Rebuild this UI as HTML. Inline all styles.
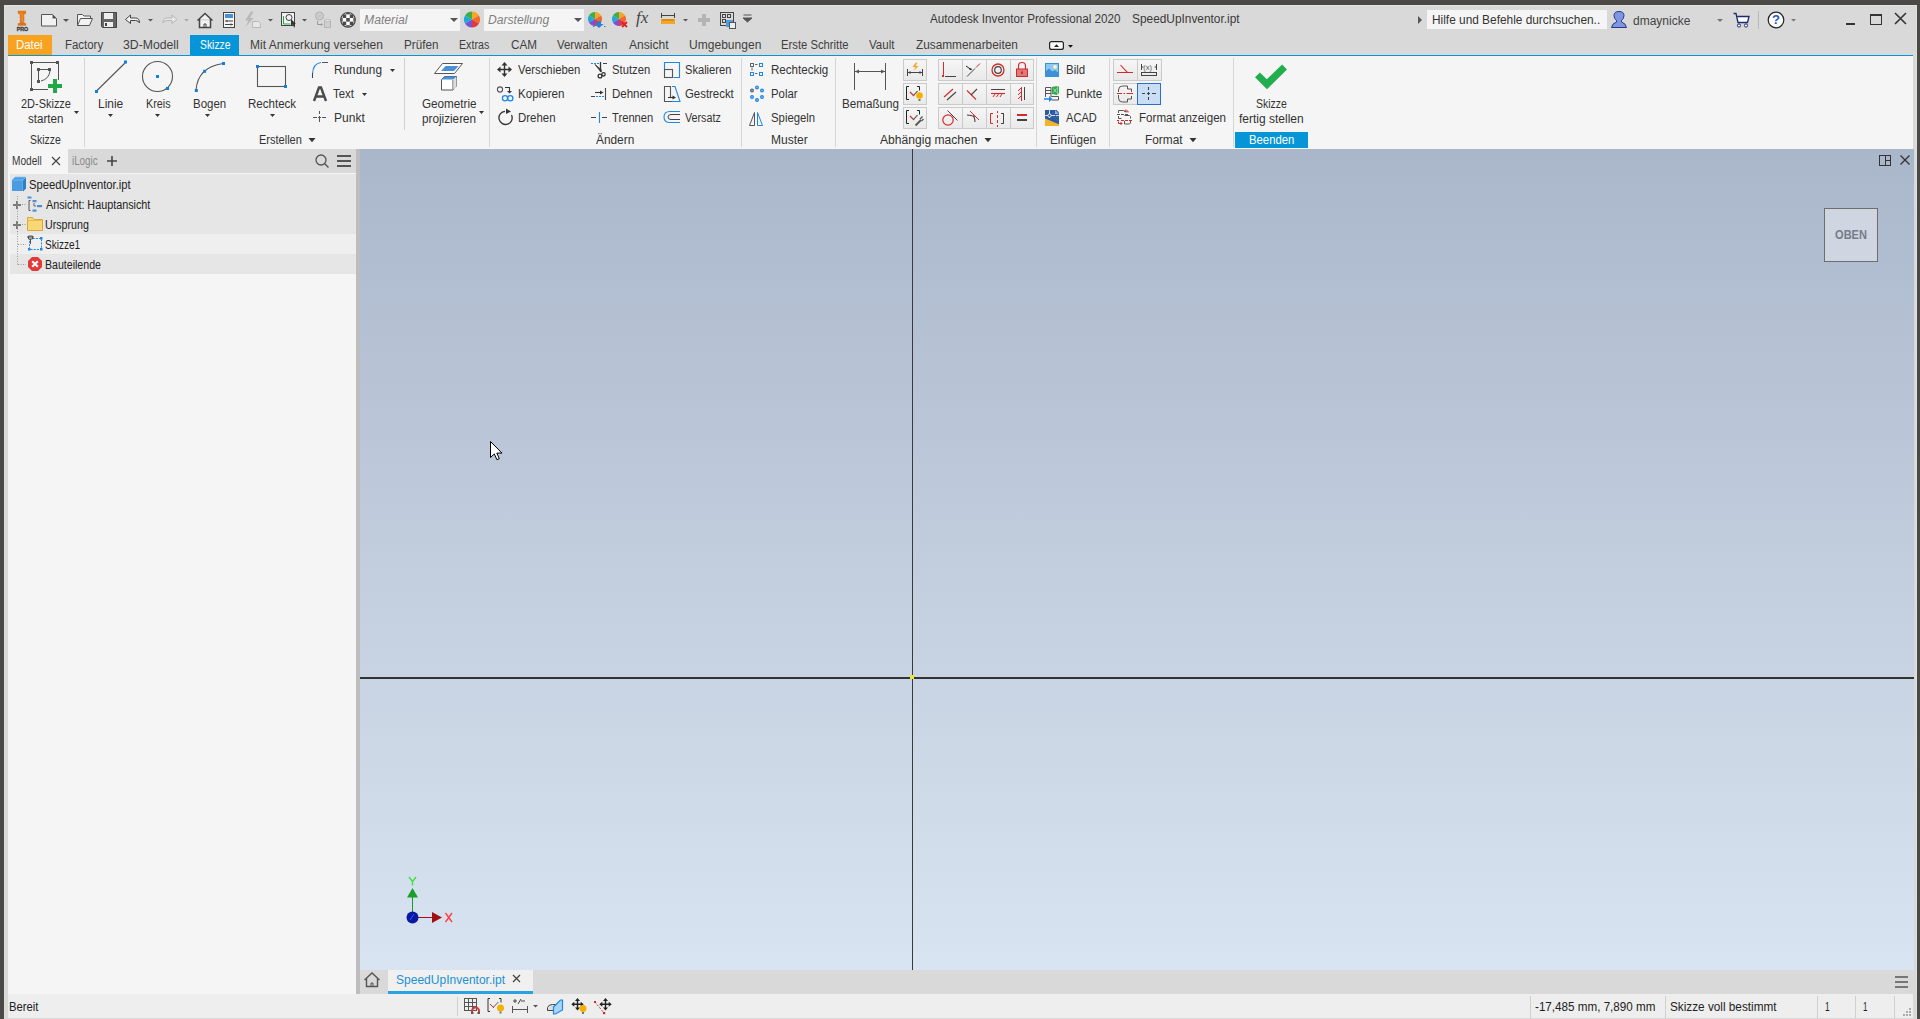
<!DOCTYPE html>
<html><head><meta charset="utf-8">
<style>
*{margin:0;padding:0;box-sizing:border-box}
html,body{width:1920px;height:1019px;overflow:hidden}
body{position:relative;background:#d9d9d9;font-family:"Liberation Sans",sans-serif;font-size:12px;color:#333}
.a{position:absolute}
.t{position:absolute;white-space:nowrap}
#ov{position:absolute;left:0;top:0;overflow:visible}
</style></head><body>
<div class="a" style="left:0px;top:0px;width:1920px;height:5px;background:#4a4946;"></div>
<div class="a" style="left:0px;top:0px;width:4px;height:1019px;background:#4a4946;"></div>
<div class="a" style="left:1917px;top:0px;width:3px;height:1019px;background:#4a4946;"></div>
<div class="a" style="left:4px;top:5px;width:1913px;height:1px;background:#e2e2e2;"></div>
<div class="a" style="left:4px;top:5px;width:1px;height:1014px;background:#e0e0e0;"></div>
<div class="a" style="left:1916px;top:5px;width:1px;height:1014px;background:#e0e0e0;"></div>
<div class="a" style="left:360px;top:9px;width:100px;height:22px;background:#f5f5f5;"></div>
<div class="a" style="left:484px;top:9px;width:100px;height:22px;background:#f5f5f5;"></div>
<div class="a" style="left:1427px;top:10px;width:180px;height:19px;background:#f5f5f5;"></div>
<div class="a" style="left:1758px;top:11px;width:1px;height:18px;background:#b8b8b8;"></div>
<div class="a" style="left:1846px;top:23px;width:9px;height:2px;background:#333;"></div>
<div class="a" style="left:8px;top:35px;width:44px;height:20px;background:#f7a31f;"></div>
<div class="a" style="left:190px;top:35px;width:49px;height:20px;background:#0696d7;"></div>
<div class="a" style="left:8px;top:55px;width:1905px;height:1px;background:#0696d7;"></div>
<div class="a" style="left:8px;top:56px;width:1905px;height:93px;background:#f5f5f5;"></div>
<div class="a" style="left:84px;top:58px;width:1px;height:89px;background:#d6d6d6;"></div>
<div class="a" style="left:404px;top:58px;width:1px;height:72px;background:#d0d0d0;"></div>
<div class="a" style="left:489px;top:58px;width:1px;height:89px;background:#d6d6d6;"></div>
<div class="a" style="left:741px;top:58px;width:1px;height:89px;background:#d6d6d6;"></div>
<div class="a" style="left:835px;top:58px;width:1px;height:89px;background:#d6d6d6;"></div>
<div class="a" style="left:903px;top:59px;width:24px;height:22px;background:linear-gradient(#f6f6f6,#e9e9e9);border:1px solid #cacaca"></div>
<div class="a" style="left:938px;top:59px;width:25px;height:22px;background:linear-gradient(#f6f6f6,#e9e9e9);border:1px solid #cacaca"></div>
<div class="a" style="left:962px;top:59px;width:25px;height:22px;background:linear-gradient(#f6f6f6,#e9e9e9);border:1px solid #cacaca"></div>
<div class="a" style="left:986px;top:59px;width:25px;height:22px;background:linear-gradient(#f6f6f6,#e9e9e9);border:1px solid #cacaca"></div>
<div class="a" style="left:1010px;top:59px;width:24px;height:22px;background:linear-gradient(#f6f6f6,#e9e9e9);border:1px solid #cacaca"></div>
<div class="a" style="left:903px;top:83px;width:24px;height:22px;background:linear-gradient(#f6f6f6,#e9e9e9);border:1px solid #cacaca"></div>
<div class="a" style="left:938px;top:83px;width:25px;height:22px;background:linear-gradient(#f6f6f6,#e9e9e9);border:1px solid #cacaca"></div>
<div class="a" style="left:962px;top:83px;width:25px;height:22px;background:linear-gradient(#f6f6f6,#e9e9e9);border:1px solid #cacaca"></div>
<div class="a" style="left:986px;top:83px;width:25px;height:22px;background:linear-gradient(#f6f6f6,#e9e9e9);border:1px solid #cacaca"></div>
<div class="a" style="left:1010px;top:83px;width:24px;height:22px;background:linear-gradient(#f6f6f6,#e9e9e9);border:1px solid #cacaca"></div>
<div class="a" style="left:903px;top:107px;width:24px;height:22px;background:linear-gradient(#f6f6f6,#e9e9e9);border:1px solid #cacaca"></div>
<div class="a" style="left:938px;top:107px;width:25px;height:22px;background:linear-gradient(#f6f6f6,#e9e9e9);border:1px solid #cacaca"></div>
<div class="a" style="left:962px;top:107px;width:25px;height:22px;background:linear-gradient(#f6f6f6,#e9e9e9);border:1px solid #cacaca"></div>
<div class="a" style="left:986px;top:107px;width:25px;height:22px;background:linear-gradient(#f6f6f6,#e9e9e9);border:1px solid #cacaca"></div>
<div class="a" style="left:1010px;top:107px;width:24px;height:22px;background:linear-gradient(#f6f6f6,#e9e9e9);border:1px solid #cacaca"></div>
<div class="a" style="left:1036px;top:58px;width:1px;height:89px;background:#d6d6d6;"></div>
<div class="a" style="left:1109px;top:58px;width:1px;height:89px;background:#d6d6d6;"></div>
<div class="a" style="left:1113px;top:59px;width:25px;height:22px;background:linear-gradient(#f6f6f6,#e9e9e9);border:1px solid #cacaca"></div>
<div class="a" style="left:1137px;top:59px;width:25px;height:22px;background:linear-gradient(#f6f6f6,#e9e9e9);border:1px solid #cacaca"></div>
<div class="a" style="left:1113px;top:83px;width:25px;height:22px;background:linear-gradient(#f6f6f6,#e9e9e9);border:1px solid #cacaca"></div>
<div class="a" style="left:1137px;top:83px;width:24px;height:22px;background:#c9def5;border:1px solid #2a70c8"></div>
<div class="a" style="left:1233px;top:58px;width:1px;height:89px;background:#d6d6d6;"></div>
<div class="a" style="left:1235px;top:132px;width:73px;height:16px;background:#0696d7;"></div>
<div class="a" style="left:8px;top:149px;width:60px;height:24px;background:#f5f5f5;"></div>
<div class="a" style="left:8px;top:173px;width:348px;height:821px;background:#f5f5f5;"></div>
<div class="a" style="left:10px;top:174px;width:346px;height:60px;background:#e6e6e6;"></div>
<div class="a" style="left:10px;top:234px;width:346px;height:20px;background:#efefef;"></div>
<div class="a" style="left:10px;top:254px;width:346px;height:20px;background:#e6e6e6;"></div>
<div class="a" style="left:356px;top:149px;width:4px;height:845px;background:#bdbdbd;"></div>
<div class="a" style="left:13px;top:203.5px;width:8px;height:2px;background:#7a7a7a;"></div>
<div class="a" style="left:16px;top:200.5px;width:2px;height:8px;background:#7a7a7a;"></div>
<div class="a" style="left:13px;top:223.5px;width:8px;height:2px;background:#7a7a7a;"></div>
<div class="a" style="left:16px;top:220.5px;width:2px;height:8px;background:#7a7a7a;"></div>
<div class="a" style="left:360px;top:149px;width:1554px;height:821px;background:linear-gradient(to bottom,#aab7cb 0%,#c4cfdf 55%,#d9e4f2 100%);"></div>
<div class="a" style="left:912px;top:149px;width:1px;height:821px;background:#3a3a3a;"></div>
<div class="a" style="left:360px;top:677px;width:1554px;height:2px;background:#333;"></div>
<div class="a" style="left:910px;top:675px;width:4px;height:4px;background:#f5e52a;"></div>
<div class="a" style="left:1824px;top:208px;width:54px;height:54px;background:#cfd6e1;border:1px solid #6e6e6e"></div>
<div class="a" style="left:388px;top:970px;width:145px;height:24px;background:#f0f0f0;"></div>
<div class="a" style="left:388px;top:991px;width:145px;height:3px;background:#29a3e0;"></div>
<div class="a" style="left:8px;top:994px;width:1905px;height:24px;background:#eeeeee;"></div>
<div class="a" style="left:457px;top:997px;width:1px;height:19px;background:#cfcfcf;"></div>
<div class="a" style="left:1530px;top:996px;width:1px;height:22px;background:#d0d0d0;"></div>
<div class="a" style="left:1665px;top:996px;width:1px;height:22px;background:#d0d0d0;"></div>
<div class="a" style="left:1817px;top:996px;width:1px;height:22px;background:#d0d0d0;"></div>
<div class="a" style="left:1855px;top:996px;width:1px;height:22px;background:#d0d0d0;"></div>
<div class="a" style="left:1894px;top:996px;width:1px;height:22px;background:#d0d0d0;"></div>
<svg id="ov" width="1920" height="1019" viewBox="0 0 1920 1019">
<g>
<path d="M17.8,10.8 h8.3 v2.6 l-1.8,1 v8.6 l1.8,0.6 v2.2 h-8.3 v-2.2 l2,-0.6 v-8.6 l-2,-1z" fill="#e27b20"/>
<path d="M20.5,13 l2.5,3 -1.5,3 2,3" stroke="#f29a45" stroke-width="0.9" fill="none"/>
<path d="M18,24 h8" stroke="#c86a18" stroke-width="0.8"/>
<text x="16.7" y="30.9" font-family="Liberation Sans" font-weight="bold" font-size="6" textLength="11.4" lengthAdjust="spacingAndGlyphs" fill="#3a3a3a" stroke="#3a3a3a" stroke-width="0.35">PRO</text>
</g>
<path d="M41.5,14.5 h11 l4,4 v7.5 h-15z" fill="#f2f2f2" stroke="#555" stroke-width="1"/><path d="M52.5,14.5 l4,4 h-4z" fill="#555"/>
<path d="M63,19 h6 l-3,3z" fill="#555"/>
<path d="M77.5,25.5 v-11 h5 l1.5,1.5 h6.5 v2.5" fill="#f2f2f2" stroke="#555"/><path d="M77.5,25.5 l3,-7 h12 l-3,7z" fill="#f2f2f2" stroke="#555"/>
<path d="M101.5,12.5 h15 v15 h-14 l-1,-1z" fill="#666" stroke="#444"/><rect x="104" y="13" width="9" height="6" fill="#eee"/><rect x="104" y="22" width="9" height="5" fill="#eee"/><rect x="105" y="23" width="2" height="3" fill="#444"/>
<path d="M125.5,19.5 l5,-4.5 v3 h5 q4,0 4,5 q-1,-2.5 -4,-2.5 h-5 v3z" fill="#f5f5f5" stroke="#444" stroke-width="1"/>
<path d="M148,19 h5 l-2.5,2.5z" fill="#555"/>
<path d="M177,19.5 l-5,-4.5 v3 h-5 q-4,0 -4,5 q1,-2.5 4,-2.5 h5 v3z" fill="#e8e8e8" stroke="#b5b5b5" stroke-width="1"/>
<path d="M184,19 h5 l-2.5,2.5z" fill="#aaa"/>
<path d="M197.5,20.5 l7.5,-7 l7.5,7 M199.5,19 v8.5 h11 v-8.5" fill="#f2f2f2" stroke="#444" stroke-width="1.5"/><path d="M204,27 v-3 h2 v3" stroke="#444" fill="none"/>
<rect x="223.5" y="12.5" width="11" height="15" fill="#f5f5f5" stroke="#444"/><rect x="225" y="14" width="8" height="4" fill="#4a90d9"/><path d="M225,21 h8 M225,24.5 h8" stroke="#444"/><path d="M227,20 v2 M231,23.5 v2" stroke="#444"/>
<path d="M251,11.5 l-6,9 h3.5 l-3,6.5 l8,-9 h-3.5 l3.5,-6.5z" fill="#b9b9b9"/><path d="M252.5,21.5 h6 l2,2 v4 h-8z" fill="#e6e6e6" stroke="#b8b8b8"/>
<path d="M268,19 h5 l-2.5,2.5z" fill="#555"/>
<rect x="281.5" y="12.5" width="13" height="13" fill="#f2f2f2" stroke="#444"/><path d="M283.5,16 v8 h7" stroke="#22aa44" fill="none" stroke-width="1"/><circle cx="289" cy="17.5" r="3" fill="none" stroke="#444"/><path d="M291,19 l5,5 h-2 l1,3 -1,0.5 -1,-3 -2,1.5z" fill="#333"/>
<path d="M302,19 h5 l-2.5,2.5z" fill="#555"/>
<circle cx="319.5" cy="16" r="4" fill="#d0d0d0" stroke="#b0b0b0"/><path d="M317,14 l5,4 M322,14 l-5,4" stroke="#bdbdbd" stroke-width="0.8"/><path d="M324.5,20.5 h6 v7 h-6z" fill="#cfcfcf" stroke="#b5b5b5"/><ellipse cx="327.5" cy="20.5" rx="3" ry="1.2" fill="#e0e0e0" stroke="#b5b5b5" stroke-width="0.8"/><path d="M317.5,21 v3.5 h4" stroke="#999" fill="none"/><path d="M321,23 l2,1.5 -2,1.5z" fill="#999"/>
<defs><clipPath id="ballclip"><circle cx="348" cy="19.8" r="7"/></clipPath></defs>
<circle cx="348" cy="19.8" r="7.2" fill="#fff"/>
<g clip-path="url(#ballclip)" fill="#4a4a4a"><rect x="339.00" y="10.80" width="3.6" height="3.6"/><rect x="339.00" y="18.00" width="3.6" height="3.6"/><rect x="339.00" y="25.20" width="3.6" height="3.6"/><rect x="342.60" y="14.40" width="3.6" height="3.6"/><rect x="342.60" y="21.60" width="3.6" height="3.6"/><rect x="346.20" y="10.80" width="3.6" height="3.6"/><rect x="346.20" y="18.00" width="3.6" height="3.6"/><rect x="346.20" y="25.20" width="3.6" height="3.6"/><rect x="349.80" y="14.40" width="3.6" height="3.6"/><rect x="349.80" y="21.60" width="3.6" height="3.6"/><rect x="353.40" y="10.80" width="3.6" height="3.6"/><rect x="353.40" y="18.00" width="3.6" height="3.6"/><rect x="353.40" y="25.20" width="3.6" height="3.6"/></g>
<circle cx="348" cy="19.8" r="7.3" fill="none" stroke="#4a4a4a" stroke-width="1.2"/>
<path d="M450,18 h8 l-4,4z" fill="#555"/>
<path d="M472,19.5 L472.00,11.50 A8,8 0 0 1 478.93,15.50z" fill="#f5a623"/><path d="M472,19.5 L478.93,15.50 A8,8 0 0 1 478.93,23.50z" fill="#f26a2a"/><path d="M472,19.5 L478.93,23.50 A8,8 0 0 1 472.00,27.50z" fill="#e0393e"/><path d="M472,19.5 L472.00,27.50 A8,8 0 0 1 465.07,23.50z" fill="#7b4fd6"/><path d="M472,19.5 L465.07,23.50 A8,8 0 0 1 465.07,15.50z" fill="#1ea9d6"/><path d="M472,19.5 L465.07,15.50 A8,8 0 0 1 472.00,11.50z" fill="#3dae49"/>
<path d="M574,18 h8 l-4,4z" fill="#555"/>
<path d="M595,19 L595.00,12.00 A7,7 0 0 1 601.06,15.50z" fill="#f5a623"/><path d="M595,19 L601.06,15.50 A7,7 0 0 1 601.06,22.50z" fill="#f26a2a"/><path d="M595,19 L601.06,22.50 A7,7 0 0 1 595.00,26.00z" fill="#e0393e"/><path d="M595,19 L595.00,26.00 A7,7 0 0 1 588.94,22.50z" fill="#7b4fd6"/><path d="M595,19 L588.94,22.50 A7,7 0 0 1 588.94,15.50z" fill="#1ea9d6"/><path d="M595,19 L588.94,15.50 A7,7 0 0 1 595.00,12.00z" fill="#3dae49"/>
<path d="M597,21 h4 v3 h2.5 l-4.5,4 -4.5,-4 h2.5z" fill="#2a7fd4"/><path d="M593,26.5 h1.5 M604,26.5 h1.5" stroke="#2a7fd4"/>
<path d="M619,19 L619.00,12.00 A7,7 0 0 1 625.06,15.50z" fill="#f5a623"/><path d="M619,19 L625.06,15.50 A7,7 0 0 1 625.06,22.50z" fill="#f26a2a"/><path d="M619,19 L625.06,22.50 A7,7 0 0 1 619.00,26.00z" fill="#e0393e"/><path d="M619,19 L619.00,26.00 A7,7 0 0 1 612.94,22.50z" fill="#7b4fd6"/><path d="M619,19 L612.94,22.50 A7,7 0 0 1 612.94,15.50z" fill="#1ea9d6"/><path d="M619,19 L612.94,15.50 A7,7 0 0 1 619.00,12.00z" fill="#3dae49"/>
<path d="M622,22 l5,5 M627,22 l-5,5" stroke="#e02020" stroke-width="1.8"/>
<path d="M661.5,13 v5 M674.5,13 v5 M661.5,15.5 h13" stroke="#444" fill="none"/><rect x="661" y="19" width="14" height="5" fill="#f5a623"/><path d="M663,19 v2 M665,19 v2 M667,19 v2 M669,19 v2 M671,19 v2 M673,19 v2" stroke="#b06000" stroke-width="0.7"/>
<path d="M683,19 h5 l-2.5,2.5z" fill="#555"/>
<path d="M702,14 h4 v4 h4 v4 h-4 v4 h-4 v-4 h-4 v-4 h4z" fill="#b4b4b4"/>
<rect x="720.5" y="12.5" width="13" height="13" fill="none" stroke="#444"/><rect x="722.5" y="14.5" width="3" height="3" fill="none" stroke="#444"/><rect x="727.5" y="14.5" width="3" height="3" fill="none" stroke="#444"/><rect x="722.5" y="19.5" width="3" height="3" fill="none" stroke="#444"/><rect x="726" y="20" width="7" height="7" fill="#4a9fe0"/><rect x="729.5" y="22.5" width="6" height="6" fill="#eee" stroke="#555"/>
<path d="M743.5,15 h8 M743,18 h9 l-4.5,4z" stroke="#555" fill="#555"/>
<path d="M1418,16 l4,4 -4,4z" fill="#555"/>
<path d="M1611.5,27.5 q0.5,-4 5,-5.5 v-1.5 q-2.5,-2 -2.5,-5 q0,-4 5,-4 q5,0 5,4 q0,3 -2.5,5 v1.5 q4.5,1.5 5,5.5z" fill="#7f95e6" stroke="#283a80" stroke-width="1"/>
<path d="M1717,19 h6 l-3,3z" fill="#777"/>
<path d="M1733.5,13.5 h2.5 l2,9 h9.5 l1.5,-6 h-11.5" fill="#fff" stroke="#1c2a6e" stroke-width="1.3"/><circle cx="1739" cy="25.5" r="1.6" fill="#fff" stroke="#1c2a6e"/><circle cx="1746" cy="25.5" r="1.6" fill="#fff" stroke="#1c2a6e"/>
<circle cx="1776" cy="20" r="7.8" fill="#fff" stroke="#222" stroke-width="1.2"/>
<path d="M1791,19 h5 l-2.5,2.5z" fill="#777"/>
<rect x="1870.5" y="14.5" width="11" height="10" fill="none" stroke="#333" stroke-width="1"/><rect x="1870" y="14" width="12" height="2" fill="#333"/>
<path d="M1895,13 l11,11 M1906,13 l-11,11" stroke="#333" stroke-width="1.6"/>
<rect x="1049.6" y="41.6" width="13.8" height="7.8" rx="2" fill="#fafafa" stroke="#222" stroke-width="1.2"/><path d="M1054,47 l2.5,-2.8 2.5,2.8z" fill="#222"/><path d="M1068,45 h5 l-2.5,2.8z" fill="#111"/>
<g stroke="#555" stroke-width="1" fill="none">
<path d="M33,62.5 h24 M33,89.5 h15 M31.5,64 v24 M58.5,64 v16"/>
<path d="M40,69.5 h9 M38.5,71 v10 M41,81 q8,-2 9,-10"/></g>
<g fill="#555"><rect x="30" y="61" width="3" height="3"/><rect x="56" y="61" width="3" height="3"/><rect x="30" y="88" width="3" height="3"/>
<rect x="37" y="68" width="3" height="3"/><rect x="48" y="68" width="3" height="3"/><rect x="37" y="80" width="3" height="3"/></g>
<path d="M53,79 h4 v5 h5 v4 h-5 v5 h-4 v-5 h-5 v-4 h5z" fill="#22a846"/>
<path d="M74,111 h5 l-2.5,3.00z" fill="#333"/>
<path d="M96.5,91 L125.5,62.5" stroke="#555" stroke-width="1.1"/>
<rect x="95.0" y="90.0" width="3" height="3" fill="#0e80e0"/>
<rect x="124.0" y="60.5" width="3" height="3" fill="#0e80e0"/>
<path d="M108,114 h5 l-2.5,3.00z" fill="#333"/>
<circle cx="157.5" cy="76.5" r="15" fill="none" stroke="#555" stroke-width="1.1"/>
<rect x="156.0" y="75.0" width="3" height="3" fill="#0e80e0"/>
<rect x="166.0" y="87.0" width="3" height="3" fill="#0e80e0"/>
<path d="M155,114 h5 l-2.5,3.00z" fill="#333"/>
<path d="M196,90 Q198,67 223,63.5" fill="none" stroke="#555" stroke-width="1.1"/>
<rect x="194.8" y="89.0" width="3" height="3" fill="#0e80e0"/>
<rect x="203.1" y="69.8" width="3" height="3" fill="#0e80e0"/>
<rect x="222.0" y="62.0" width="3" height="3" fill="#0e80e0"/>
<path d="M205,114 h5 l-2.5,3.00z" fill="#333"/>
<rect x="257.5" y="66.5" width="28" height="20" fill="none" stroke="#555" stroke-width="1.1"/>
<rect x="256.0" y="65.0" width="3" height="3" fill="#0e80e0"/>
<rect x="284.0" y="85.0" width="3" height="3" fill="#0e80e0"/>
<path d="M270,114 h5 l-2.5,3.00z" fill="#333"/>
<path d="M312.5,78 v-4 Q313,63.5 321,62.5" fill="none" stroke="#1e88e5" stroke-width="1.1"/><path d="M312.5,73 v5" stroke="#444"/><path d="M322,62.5 h6" stroke="#555"/>
<path d="M390,69 h5 l-2.5,3.00z" fill="#333"/>
<path d="M314,101 L319,87.5 h2 L326,101 M316,96.5 h8" fill="none" stroke="#4a4a4a" stroke-width="2.4"/>
<path d="M362,93 h5 l-2.5,3.00z" fill="#333"/>
<path d="M319.5,111 v3 M319.5,116 v6 M313,117.5 h4 M318,117.5 h3 M322,117.5 h4" stroke="#555" stroke-width="1"/>
<path d="M308.5,138 h7 l-3.5,4.20z" fill="#333"/>
<path d="M434.5,73.5 l8,-10 h20 l-8,10z" fill="#fff" stroke="#555" stroke-width="1"/>
<path d="M441,71 l4.5,-5 h13 l-4.5,5z" fill="#4a90d9"/>
<path d="M441.5,79.5 l3,-3 h12 v10 l-3.5,3.5 h-11.5z" fill="#fff" stroke="#555"/>
<path d="M441.5,79.5 l3,-3 h12 l-3,3z" fill="#4a90d9"/><path d="M453,80 v9.5" stroke="#555"/><path d="M453.5,80 l3,-3 v10 l-3,3z" fill="#ddd"/>
<path d="M479,111 h5 l-2.5,3.00z" fill="#333"/>
<path d="M504.5,65 v9 M500,69.5 h9" stroke="#333" stroke-width="1.4"/><path d="M504.5,62 l3,3.5 h-6z M504.5,77 l3,-3.5 h-6z M497,69.5 l3.5,-3 v6z M512,69.5 l-3.5,-3 v6z" fill="#333"/>
<circle cx="500" cy="89.5" r="2.6" fill="none" stroke="#555" stroke-width="1.1"/><path d="M505,87.5 h4.5 v3.5" fill="none" stroke="#333" stroke-width="1.1"/><path d="M507,91 h5 l-2.5,2.5z" fill="#333"/><circle cx="505" cy="98.3" r="2.6" fill="none" stroke="#1e88e5" stroke-width="1.3"/><circle cx="510.3" cy="98.3" r="2.6" fill="none" stroke="#1e88e5" stroke-width="1.3"/>
<path d="M511.5,115 A6.6,6.6 0 1 1 505,111.3" fill="none" stroke="#333" stroke-width="1.3"/><path d="M506,108.5 l5,3 -5,2.5z" fill="#333"/>
<path d="M591,63.5 h8" stroke="#1e88e5" stroke-dasharray="2,1"/><path d="M603,63.5 h4" stroke="#444"/><path d="M600.5,62 v10" stroke="#333" stroke-width="1.3"/><path d="M595,64.5 l6,7.5 l0.5,-2z" fill="#333" stroke="#333" stroke-width="0.8"/><circle cx="600" cy="76" r="1.9" fill="none" stroke="#333" stroke-width="1.3"/><circle cx="603.5" cy="74.3" r="1.7" fill="none" stroke="#333" stroke-width="1.3"/>
<path d="M591,96.5 h4" stroke="#444"/><path d="M596,96.5 h8" stroke="#1e88e5" stroke-dasharray="2,1"/><path d="M595,92.5 h6" stroke="#333" stroke-width="1.1"/><path d="M600,90.5 l3.5,2 -3.5,2z" fill="#333"/><path d="M605.5,88 v12" stroke="#444" stroke-width="1.1"/>
<path d="M591,117.5 h5 M602,117.5 h5" stroke="#444" stroke-width="1"/><path d="M599.5,112 v11" stroke="#1e88e5" stroke-width="1.1"/>
<path d="M664.5,69 v-6.5 h15 v15 h-6" fill="none" stroke="#1e88e5" stroke-width="1.1"/><rect x="664.5" y="69.5" width="8" height="8" fill="none" stroke="#555" stroke-width="1.1"/>
<path d="M672,101.5 h-7.5 v-15 h6 v11" fill="none" stroke="#555" stroke-width="1.1"/><path d="M672,86.5 h3 l5,15 h-8" fill="none" stroke="#1e88e5" stroke-width="1.1"/><path d="M668,97.5 h5" stroke="#333" stroke-width="1.1"/><path d="M672.5,95.5 l3.5,2 -3.5,2z" fill="#333"/>
<path d="M680,111.5 h-10 q-6,0 -6,5.5 q0,5.5 6,5.5 h10" fill="none" stroke="#1e88e5" stroke-width="1.1"/><path d="M680,114.5 h-9 q-3,0 -3,2.5 q0,2.5 3,2.5 h9" fill="none" stroke="#444" stroke-width="1"/>
<g fill="none" stroke="#1e88e5"><rect x="759.5" y="63.5" width="3" height="3"/><rect x="750.5" y="72.5" width="3" height="3"/><rect x="759.5" y="72.5" width="3" height="3"/></g><rect x="750.5" y="63.5" width="3" height="3" fill="none" stroke="#666"/><path d="M755,64.5 h2.5 M752,67.5 v3 M755,73.5 h2.5" stroke="#666"/>
<g fill="#9fcaf5" stroke="#1e88e5" stroke-width="1.2"><circle cx="752" cy="90.5" r="1.4" fill="#aaa" stroke="#666"/><circle cx="757" cy="87.5" r="1.4"/><circle cx="762" cy="90.5" r="1.4"/><circle cx="752" cy="97" r="1.4"/><circle cx="762" cy="97" r="1.4"/><circle cx="757" cy="100" r="1.4"/></g>
<path d="M749.5,125.5 l5,-13 v13z" fill="none" stroke="#555"/><path d="M757.5,125.5 v-13 l5,13z" fill="none" stroke="#1e88e5"/>
<path d="M854.5,63 v27 M885.5,63 v27 M855,71.5 h30" stroke="#555" stroke-width="1"/><path d="M855,71.5 l4,-2 v4z M885,71.5 l-4,-2 v4z" fill="#555"/>
<path d="M907.5,69 v7 M922.5,69 v7 M908,72.5 h14" stroke="#444" stroke-width="1"/><path d="M908,72.5 l2.5,-1.5 v3z M922,72.5 l-2.5,-1.5 v3z" fill="#444"/><path d="M916,62.5 l-3.5,4.5 h3 l-2,4 5,-5 h-3 l2,-3.5z" fill="#f5a623"/>
<path d="M909,86.5 h-2.5 v13 h2.5 M917,86.5 h2.5 v4" fill="none" stroke="#222" stroke-width="1"/><path d="M910,92 l4,4" stroke="#d42a2a" stroke-width="1.1"/><path d="M913.5,95.5 l4,-4.5" stroke="#444" stroke-width="1.1"/><circle cx="919.5" cy="95.5" r="3.3" fill="#f5b000"/><rect x="918.5" y="99" width="2" height="2" fill="#777"/>
<path d="M909,110.5 h-2.5 v13 h2.5 M917,110.5 h2.5 v4" fill="none" stroke="#222" stroke-width="1"/><path d="M910,116 l4,4" stroke="#d42a2a" stroke-width="1.1"/><path d="M913.5,119.5 l4,-4.5" stroke="#444" stroke-width="1.1"/><path d="M915.5,125.5 l5.5,-5.5" stroke="#555" stroke-width="1.8"/><path d="M920,119 l2.5,-2.5 M921.5,121 l2,-2" stroke="#555" stroke-width="1.3"/>
<path d="M943.5,62 v13" stroke="#d42a2a"/><rect x="942" y="75" width="2" height="2" fill="#d42a2a"/><path d="M945,76.5 h11" stroke="#444"/>
<path d="M967,76.5 l8,-8" stroke="#444"/><path d="M976,67.5 l4,-4" stroke="#d42a2a"/><path d="M966,66 l5,3.5" stroke="#222"/><path d="M972,70 l-3,0 2,-2z" fill="#222"/>
<circle cx="998" cy="70" r="6" fill="none" stroke="#d42a2a" stroke-width="1.3"/><circle cx="998" cy="70" r="3.3" fill="none" stroke="#444" stroke-width="1.2"/>
<path d="M1018.5,69 v-3 a3.5,3.5 0 0 1 7,0 v3" fill="none" stroke="#d42a2a" stroke-width="1.2"/><rect x="1016.5" y="69" width="11" height="7.5" fill="#dd7a7e" stroke="#d42a2a"/><rect x="1021" y="71.5" width="2" height="2.5" fill="#d42a2a"/>
<path d="M944,97 l9,-8" stroke="#d42a2a" stroke-width="1.1"/><path d="M947,100 l9,-8" stroke="#444" stroke-width="1.1"/>
<path d="M967,90.5 l9,9" stroke="#d42a2a" stroke-width="1.1"/><path d="M971,95 l6,-6" stroke="#444" stroke-width="1.1"/>
<path d="M991,89.5 h14" stroke="#444"/><path d="M991,93.5 h14" stroke="#d42a2a" stroke-width="1.1"/><path d="M993,97 l2,-3 M996.5,97 l2,-3 M1000,97 l2,-3" stroke="#d42a2a"/>
<path d="M1024.5,87 v13" stroke="#444"/><path d="M1021.5,87 v14" stroke="#d42a2a"/><path d="M1018,91 l3,-3 M1018,95 l3,-3 M1018,99 l3,-3" stroke="#d42a2a"/>
<circle cx="948" cy="120" r="5.2" fill="none" stroke="#d42a2a" stroke-width="1.2"/><path d="M947.5,110.5 l10,10" stroke="#444"/>
<path d="M970,111 l9,9" stroke="#d42a2a"/><path d="M967,115 q5,0 7,2 q1,2 1,5" fill="none" stroke="#444" stroke-width="1.1"/><circle cx="974" cy="116" r="1" fill="#d42a2a"/>
<path d="M993,113.5 h-2.5 v10 h2.5 M1001,113.5 h2.5 v10 h-2.5" fill="none" stroke="#d42a2a"/><path d="M997.5,111 v2 M997.5,115 v3 M997.5,120 v3 M997.5,125 v2" stroke="#d42a2a"/><path d="M1001,123.5 h2.5 v-10 h-2.5" fill="none" stroke="#444"/>
<rect x="1017" y="114" width="10" height="2" fill="#d42a2a"/><rect x="1017" y="119" width="10" height="2" fill="#444"/>
<path d="M984.5,138 h7 l-3.5,4.20z" fill="#333"/>
<rect x="1045" y="63" width="14" height="14" fill="#3a8fd8"/><rect x="1046" y="64" width="12" height="12" fill="#8cc8f2"/><circle cx="1055" cy="66.8" r="1.9" fill="#fff3b8"/><path d="M1046,76 v-5 l3,-2.5 3.5,3 2.5,-1.5 3,2.5 v3.5z" fill="#3d8fd6"/>
<path d="M1045.5,97 v-9.5 h5.5 v9.5 M1045.5,90.5 h5.5 M1045.5,93.5 h5.5" fill="none" stroke="#555" stroke-width="1"/><path d="M1052,87 l5.5,-1 v9 l-5.5,-1z" fill="#2aa84a"/><path d="M1053.5,88.5 l3,4 M1056.5,88.5 l-3,4" stroke="#bfe8c8" stroke-width="0.8"/><path d="M1058.5,86.5 v7" stroke="#2aa84a" stroke-width="1"/><path d="M1051.5,96.5 h7 v3.5 h-7" fill="none" stroke="#555" stroke-width="1"/><path d="M1044,99 h6" stroke="#1e88e5" stroke-width="1.5"/><path d="M1049,96 l3.5,3 -3.5,3z" fill="#1e88e5"/>
<path d="M1045,110 h11.5 l2.5,2.5 v13.5 h-14z" fill="#2b5aa0"/><path d="M1045,118.5 L1059,124.3 V126 H1045z" fill="#f4b42a"/><path d="M1049.5,110 v8 M1045,115.5 h14" stroke="#e8eef8" stroke-width="0.9"/><circle cx="1049.5" cy="115.5" r="1.6" fill="#2b5aa0" stroke="#fff" stroke-width="0.9"/><path d="M1055,110 l4,4 h-4z" fill="#8fb0e0"/><path d="M1052,112 l6,6 M1053,116 l5,5" stroke="#3f6fb8" stroke-width="0.8"/>
<path d="M1117,72.5 h16 M1120.5,65 l6.8,7.3" stroke="#d42a2a" stroke-width="1.1" fill="none"/>
<path d="M1141.5,64 v6 M1156.5,64 v6 M1142,67 h1.5 M1154.5,67 h1.5" stroke="#444" stroke-width="1"/><text x="1143.2" y="69.6" font-size="7.5" font-family="Liberation Sans" fill="#555">(x)</text><rect x="1141.5" y="72.5" width="15" height="3" fill="none" stroke="#444"/>
<path d="M1131.5,92 v-3 h-4 v-3 h-5 q-4,0 -4,4 v2 M1118.5,95 v3 q0,4 4,4 h5 v-3 h4 v-3" fill="none" stroke="#555" stroke-width="1"/><path d="M1117,93.5 h5 M1123.5,93.5 h1.5 M1126.5,93.5 h6.5" stroke="#d42a2a" stroke-width="1.1"/>
<path d="M1148.5,87 v3 M1148.5,92 v3 M1148.5,97 v3 M1142,93.5 h3 M1147,93.5 h3 M1152,93.5 h4" stroke="#444" stroke-width="1.1"/>
<g stroke="#555" fill="none" stroke-width="1"><path d="M1118.5,113 v-2.5 h5 l1,1 h2"/><path d="M1117,114.5 h3 M1121,114.5 h3 M1125,114.5 h3" /><path d="M1118.5,116 v2.5 h3"/><path d="M1124.5,115.5 h5 l1,1 v2"/><path d="M1124.5,121 v3 h5 l1,-1 v-2"/></g><path d="M1128,112.5 v-1.5 h-3 M1126,109.5 l-1.5,1.5 1.5,1.5" stroke="#d42a2a" fill="none"/><path d="M1117,120.5 h2 M1121,120.5 h3 M1125,120.5 h3 M1129,120.5 h3" stroke="#d42a2a"/><path d="M1118.5,121.5 v2 h3.5 M1120.5,122 l1.5,1.5 -1.5,1.5" stroke="#d42a2a" fill="none"/>
<path d="M1189.5,138 h7 l-3.5,4.20z" fill="#333"/>
<path d="M1255,77.2 L1259.9,72.5 L1266.8,79.2 L1282.1,64.5 L1287,69.4 L1267,89.2z" fill="#22ad4e"/>
<path d="M52,157 l8,8 M60,157 l-8,8" stroke="#444" stroke-width="1.2"/>
<path d="M112,156 v10 M107,161 h10" stroke="#444" stroke-width="1.6"/>
<circle cx="321" cy="160" r="5" fill="none" stroke="#555" stroke-width="1.3"/><path d="M324.5,163.5 l4,4" stroke="#555" stroke-width="1.5"/>
<path d="M337,156 h14 M337,161 h14 M337,166 h14" stroke="#555" stroke-width="1.8"/>
<path d="M17.5,196 v69 M22,204.5 h4 M22,224.5 h4 M18,244.5 h8 M18,264.5 h8" stroke="#999" stroke-width="1" stroke-dasharray="1,1.5"/>
<path d="M12,180 l3,-3 h11 v11 l-3,3 h-11z" fill="#4a9be0"/><path d="M12,180 h11 v11" fill="none" stroke="#7fc0f0" stroke-width="0.8"/><path d="M23,180 l3,-3 M12,180 l3,-3 h11" fill="none" stroke="#8cc8f5" stroke-width="0.8"/><path d="M23,180.5 l3,-3 v11 l-3,3z" fill="#2f7fc8"/>
<path d="M30.5,200.5 h-1.5 v10 h1.5" fill="none" stroke="#555" stroke-width="1"/><rect x="27.5" y="196.5" width="4" height="2" fill="#4a8fd6"/><rect x="32.5" y="200" width="4" height="2.2" fill="#4a8fd6"/><rect x="37" y="205" width="5" height="2.2" fill="#4a8fd6"/><rect x="32.5" y="209.5" width="4" height="2.2" fill="#4a8fd6"/><path d="M34,203 v3 h2" stroke="#444" fill="none" stroke-width="0.8"/>
<path d="M27.5,217.5 h5 l1.5,2 h8.5 v11 h-15z" fill="#f8d775" stroke="#d9a640" stroke-width="1"/><path d="M27.5,220.5 h15" stroke="#e5b84a" stroke-width="0.8"/>
<rect x="29.5" y="238.5" width="12" height="11" fill="none" stroke="#1e88e5" stroke-dasharray="2,1.2"/><rect x="28" y="248" width="2.5" height="2.5" fill="#1e88e5"/><rect x="40" y="248" width="2.5" height="2.5" fill="#1e88e5"/><rect x="40" y="237" width="2.5" height="2.5" fill="#1e88e5"/><path d="M27,237 h7 M28.5,236 h4 v3 h-4z" fill="#ddd" stroke="#444" stroke-width="0.9"/><path d="M30.5,239 v5" stroke="#444" stroke-width="0.9"/>
<path d="M32,257 h6 l4,4 v6 l-4,4 h-6 l-4,-4 v-6z" fill="#e03b3b"/><path d="M32.2,261.2 l5.6,5.6 M37.8,261.2 l-5.6,5.6" stroke="#fff" stroke-width="2"/>
<rect x="1879.5" y="155.5" width="11" height="10" fill="none" stroke="#333"/><path d="M1885.5,156 v9 M1886,160.5 h4.5" stroke="#333"/>
<path d="M1900.5,155.5 l9,9 M1909.5,155.5 l-9,9" stroke="#333" stroke-width="1.3"/>
<path d="M412.5,917 v-20" stroke="#1a9a2a" stroke-width="1"/>
<path d="M412.5,888 l5.5,9.5 h-11z" fill="#18a028"/>
<path d="M412,917.5 h20" stroke="#a81010" stroke-width="1"/>
<path d="M442,917.5 l-10,-5.5 v11z" fill="#a01010"/>
<circle cx="412.5" cy="917.5" r="6" fill="#0a1aa0"/>
<path d="M410,920 l4,-6" stroke="#2a5af0" stroke-width="1"/>
<path d="M409,877 l3.5,4.5 3.5,-4.5 M412.5,881.5 v4" stroke="#40e040" stroke-width="1.4" fill="none"/>
<path d="M445.5,913 l6.5,9 M452,913 l-6.5,9" stroke="#ff4040" stroke-width="1.4"/>
<path d="M490.5,441.5 v16 l3.8,-3.6 l2.6,5.8 l2.4,-1 l-2.5,-5.6 h5.2z" fill="#fff" stroke="#000" stroke-width="1"/>
<path d="M364.5,980 l7.5,-7 7.5,7 M366.5,978.5 v8 h11 v-8" fill="none" stroke="#555" stroke-width="1.4"/><path d="M371,986 v-3 h2 v3" stroke="#555" fill="none"/>
<path d="M513,975 l7,7 M520,975 l-7,7" stroke="#444" stroke-width="1.3"/>
<path d="M1895,977 h13 M1895,982 h13 M1895,987 h13" stroke="#555" stroke-width="1.6"/>
<g stroke="#555" fill="none"><rect x="464.5" y="998.5" width="12" height="12"/><path d="M468.5,998.5 v12 M472.5,998.5 v12 M464.5,1002.5 h12 M464.5,1006.5 h12"/></g><path d="M472,1014 v-3 a3.5,3.5 0 0 1 7,0 v3" fill="none" stroke="#d03a3a" stroke-width="2"/><rect x="471.5" y="1012" width="2" height="2" fill="#555"/><rect x="477.5" y="1012" width="2" height="2" fill="#555"/>
<path d="M490,998.5 h-2 v13 h2 M499,998.5 h2 v4" fill="none" stroke="#333"/><path d="M490,1004 l4,4" stroke="#d42a2a"/><path d="M493.5,1007 l5,-5" stroke="#555"/><circle cx="500.5" cy="1008" r="3.5" fill="#f5b000"/><rect x="499.5" y="1011.5" width="2" height="2" fill="#777"/>
<path d="M513,1001 h4 M515,999 v4 M518,1004 l3,-5 M521,1001 h4" stroke="#444" stroke-width="1"/><path d="M512.5,1006 v7 M527.5,1006 v7 M513,1009.5 h14" stroke="#555"/>
<path d="M533,1005 h5 l-2.5,2.5z" fill="#555"/>
<path d="M547.5,1010.5 v-3 q1,-3 5,-3 h5 v6z" fill="#ddd" stroke="#444"/><path d="M553.5,1007 l7,-7 h2 v10 l-7,4 h-2z" fill="#a9d5f5" stroke="#1e88e5" stroke-width="1.2"/>
<path d="M577.5,998 l2.5,3 h-1.8 v2.5 h2.5 v-1.8 l3,2.5 -3,2.5 v-1.8 h-2.5 v2.5 h1.8 l-2.5,3 -2.5,-3 h1.8 v-2.5 h-2.5 v1.8 l-3,-2.5 3,-2.5 v1.8 h2.5 v-2.5 h-1.8z" fill="#222"/><circle cx="583" cy="1008.5" r="3.5" fill="#f5b000"/><rect x="582" y="1012" width="2" height="2" fill="#777"/>
<path d="M595,1002 l9,11" stroke="#d42a2a" stroke-dasharray="2,1.5"/><rect x="594" y="1001" width="2" height="2" fill="#d42a2a"/><rect x="603" y="1012" width="2.2" height="2.2" fill="#d42a2a"/><path d="M605.5,998 l2.5,3 h-1.8 v2.5 h2.5 v-1.8 l3,2.5 -3,2.5 v-1.8 h-2.5 v2.5 h1.8 l-2.5,3 -2.5,-3 h1.8 v-2.5 h-2.5 v1.8 l-3,-2.5 3,-2.5 v1.8 h2.5 v-2.5 h-1.8z" fill="#222"/>
<g fill="#aaa"><rect x="1909" y="1008" width="2" height="2"/><rect x="1906" y="1011" width="2" height="2"/><rect x="1909" y="1011" width="2" height="2"/><rect x="1903" y="1014" width="2" height="2"/><rect x="1906" y="1014" width="2" height="2"/><rect x="1909" y="1014" width="2" height="2"/></g>
</svg>
<div class="t" style="left:364.40px;top:12.84px;font-size:12px;line-height:14px;color:#808080;font-style:italic;transform:scaleX(1.0163);transform-origin:0 0;">Material</div>
<div class="t" style="left:488.10px;top:12.84px;font-size:12px;line-height:14px;color:#808080;font-style:italic;transform:scaleX(1.0091);transform-origin:0 0;">Darstellung</div>
<div class="t" style="left:636px;top:9px;font-family:'Liberation Serif';font-style:italic;font-size:17px;line-height:18px;color:#444">fx</div>
<div class="t" style="left:929.50px;top:11.84px;font-size:12px;line-height:14px;color:#3a3a3a;transform:scaleX(0.9713);transform-origin:0 0;">Autodesk Inventor Professional 2020</div>
<div class="t" style="left:1132.00px;top:11.84px;font-size:12px;line-height:14px;color:#3a3a3a;transform:scaleX(0.9894);transform-origin:0 0;">SpeedUpInventor.ipt</div>
<div class="t" style="left:1432.40px;top:12.84px;font-size:12px;line-height:14px;color:#333;transform:scaleX(0.9887);transform-origin:0 0;">Hilfe und Befehle durchsuchen..</div>
<div class="t" style="left:1632.60px;top:13.84px;font-size:12px;line-height:14px;color:#444;transform:scaleX(1.0004);transform-origin:0 0;">dmaynicke</div>
<div class="t" style="left:1772px;top:12px;font-size:13px;line-height:16px;font-weight:bold;color:#1f57c3">?</div>
<div class="t" style="left:16.30px;top:37.84px;font-size:12px;line-height:14px;color:#fff;transform:scaleX(0.9464);transform-origin:0 0;">Datei</div>
<div class="t" style="left:64.70px;top:37.84px;font-size:12px;line-height:14px;color:#3f3f3f;transform:scaleX(0.9525);transform-origin:0 0;">Factory</div>
<div class="t" style="left:123.00px;top:37.84px;font-size:12px;line-height:14px;color:#3f3f3f;transform:scaleX(1.0197);transform-origin:0 0;">3D-Modell</div>
<div class="t" style="left:199.70px;top:37.84px;font-size:12px;line-height:14px;color:#fff;transform:scaleX(0.8650);transform-origin:0 0;">Skizze</div>
<div class="t" style="left:250.30px;top:37.84px;font-size:12px;line-height:14px;color:#3f3f3f;transform:scaleX(1.0019);transform-origin:0 0;">Mit Anmerkung versehen</div>
<div class="t" style="left:404.20px;top:37.84px;font-size:12px;line-height:14px;color:#3f3f3f;transform:scaleX(0.9724);transform-origin:0 0;">Prüfen</div>
<div class="t" style="left:459.30px;top:37.84px;font-size:12px;line-height:14px;color:#3f3f3f;transform:scaleX(0.8882);transform-origin:0 0;">Extras</div>
<div class="t" style="left:510.90px;top:37.84px;font-size:12px;line-height:14px;color:#3f3f3f;transform:scaleX(0.9728);transform-origin:0 0;">CAM</div>
<div class="t" style="left:557.40px;top:37.84px;font-size:12px;line-height:14px;color:#3f3f3f;transform:scaleX(0.9536);transform-origin:0 0;">Verwalten</div>
<div class="t" style="left:628.50px;top:37.84px;font-size:12px;line-height:14px;color:#3f3f3f;transform:scaleX(1.0032);transform-origin:0 0;">Ansicht</div>
<div class="t" style="left:688.60px;top:37.84px;font-size:12px;line-height:14px;color:#3f3f3f;transform:scaleX(1.0042);transform-origin:0 0;">Umgebungen</div>
<div class="t" style="left:781.40px;top:37.84px;font-size:12px;line-height:14px;color:#3f3f3f;transform:scaleX(0.9389);transform-origin:0 0;">Erste Schritte</div>
<div class="t" style="left:869.40px;top:37.84px;font-size:12px;line-height:14px;color:#3f3f3f;transform:scaleX(0.9623);transform-origin:0 0;">Vault</div>
<div class="t" style="left:915.50px;top:37.84px;font-size:12px;line-height:14px;color:#3f3f3f;transform:scaleX(0.9848);transform-origin:0 0;">Zusammenarbeiten</div>
<div class="t" style="left:21.00px;top:96.84px;font-size:12px;line-height:14px;color:#333;transform:scaleX(0.9135);transform-origin:0 0;">2D-Skizze</div>
<div class="t" style="left:28.10px;top:111.84px;font-size:12px;line-height:14px;color:#333;transform:scaleX(0.9638);transform-origin:0 0;">starten</div>
<div class="t" style="left:30.30px;top:133.34px;font-size:12px;line-height:14px;color:#333;transform:scaleX(0.8678);transform-origin:0 0;">Skizze</div>
<div class="t" style="left:98.00px;top:96.84px;font-size:12px;line-height:14px;color:#333;transform:scaleX(0.9931);transform-origin:0 0;">Linie</div>
<div class="t" style="left:145.60px;top:96.84px;font-size:12px;line-height:14px;color:#333;transform:scaleX(0.8986);transform-origin:0 0;">Kreis</div>
<div class="t" style="left:192.60px;top:96.84px;font-size:12px;line-height:14px;color:#333;transform:scaleX(0.9554);transform-origin:0 0;">Bogen</div>
<div class="t" style="left:248.10px;top:96.84px;font-size:12px;line-height:14px;color:#333;transform:scaleX(0.9616);transform-origin:0 0;">Rechteck</div>
<div class="t" style="left:333.70px;top:62.84px;font-size:12px;line-height:14px;color:#333;transform:scaleX(0.9846);transform-origin:0 0;">Rundung</div>
<div class="t" style="left:333.20px;top:86.84px;font-size:12px;line-height:14px;color:#333;transform:scaleX(0.9455);transform-origin:0 0;">Text</div>
<div class="t" style="left:333.50px;top:110.84px;font-size:12px;line-height:14px;color:#333;transform:scaleX(1.0024);transform-origin:0 0;">Punkt</div>
<div class="t" style="left:258.80px;top:133.34px;font-size:12px;line-height:14px;color:#333;transform:scaleX(0.9176);transform-origin:0 0;">Erstellen</div>
<div class="t" style="left:421.60px;top:97.34px;font-size:12px;line-height:14px;color:#333;transform:scaleX(0.9750);transform-origin:0 0;">Geometrie</div>
<div class="t" style="left:421.60px;top:111.84px;font-size:12px;line-height:14px;color:#333;transform:scaleX(0.9770);transform-origin:0 0;">projizieren</div>
<div class="t" style="left:518.20px;top:62.84px;font-size:12px;line-height:14px;color:#333;transform:scaleX(0.9439);transform-origin:0 0;">Verschieben</div>
<div class="t" style="left:518.20px;top:86.84px;font-size:12px;line-height:14px;color:#333;transform:scaleX(0.9667);transform-origin:0 0;">Kopieren</div>
<div class="t" style="left:518.20px;top:110.84px;font-size:12px;line-height:14px;color:#333;transform:scaleX(0.9524);transform-origin:0 0;">Drehen</div>
<div class="t" style="left:612.30px;top:62.84px;font-size:12px;line-height:14px;color:#333;transform:scaleX(0.9374);transform-origin:0 0;">Stutzen</div>
<div class="t" style="left:612.30px;top:86.84px;font-size:12px;line-height:14px;color:#333;transform:scaleX(0.9595);transform-origin:0 0;">Dehnen</div>
<div class="t" style="left:612.30px;top:110.84px;font-size:12px;line-height:14px;color:#333;transform:scaleX(0.9333);transform-origin:0 0;">Trennen</div>
<div class="t" style="left:685.10px;top:62.84px;font-size:12px;line-height:14px;color:#333;transform:scaleX(0.9260);transform-origin:0 0;">Skalieren</div>
<div class="t" style="left:685.10px;top:86.84px;font-size:12px;line-height:14px;color:#333;transform:scaleX(0.9499);transform-origin:0 0;">Gestreckt</div>
<div class="t" style="left:685.10px;top:110.84px;font-size:12px;line-height:14px;color:#333;transform:scaleX(0.8950);transform-origin:0 0;">Versatz</div>
<div class="t" style="left:596.30px;top:133.34px;font-size:12px;line-height:14px;color:#333;transform:scaleX(0.9884);transform-origin:0 0;">Ändern</div>
<div class="t" style="left:770.50px;top:62.84px;font-size:12px;line-height:14px;color:#333;transform:scaleX(0.9651);transform-origin:0 0;">Rechteckig</div>
<div class="t" style="left:770.50px;top:86.84px;font-size:12px;line-height:14px;color:#333;transform:scaleX(0.9464);transform-origin:0 0;">Polar</div>
<div class="t" style="left:770.50px;top:110.84px;font-size:12px;line-height:14px;color:#333;transform:scaleX(0.9455);transform-origin:0 0;">Spiegeln</div>
<div class="t" style="left:770.50px;top:133.34px;font-size:12px;line-height:14px;color:#333;transform:scaleX(1.0020);transform-origin:0 0;">Muster</div>
<div class="t" style="left:841.60px;top:96.84px;font-size:12px;line-height:14px;color:#333;transform:scaleX(0.9702);transform-origin:0 0;">Bemaßung</div>
<div class="t" style="left:880.30px;top:133.34px;font-size:12px;line-height:14px;color:#333;transform:scaleX(1.0078);transform-origin:0 0;">Abhängig machen</div>
<div class="t" style="left:1065.60px;top:62.84px;font-size:12px;line-height:14px;color:#333;transform:scaleX(0.9550);transform-origin:0 0;">Bild</div>
<div class="t" style="left:1065.60px;top:86.84px;font-size:12px;line-height:14px;color:#333;transform:scaleX(0.9712);transform-origin:0 0;">Punkte</div>
<div class="t" style="left:1065.60px;top:110.84px;font-size:12px;line-height:14px;color:#333;transform:scaleX(0.9228);transform-origin:0 0;">ACAD</div>
<div class="t" style="left:1049.50px;top:133.34px;font-size:12px;line-height:14px;color:#333;transform:scaleX(0.9731);transform-origin:0 0;">Einfügen</div>
<div class="t" style="left:1138.60px;top:110.84px;font-size:12px;line-height:14px;color:#333;transform:scaleX(0.9667);transform-origin:0 0;">Format anzeigen</div>
<div class="t" style="left:1145.30px;top:133.34px;font-size:12px;line-height:14px;color:#333;transform:scaleX(0.9868);transform-origin:0 0;">Format</div>
<div class="t" style="left:1256.10px;top:96.84px;font-size:12px;line-height:14px;color:#333;transform:scaleX(0.8735);transform-origin:0 0;">Skizze</div>
<div class="t" style="left:1239.00px;top:111.84px;font-size:12px;line-height:14px;color:#333;transform:scaleX(0.9992);transform-origin:0 0;">fertig stellen</div>
<div class="t" style="left:1248.75px;top:132.84px;font-size:12px;line-height:14px;color:#fff;transform:scaleX(0.9437);transform-origin:0 0;">Beenden</div>
<div class="t" style="left:11.60px;top:153.84px;font-size:12px;line-height:14px;color:#3a3a3a;transform:scaleX(0.8424);transform-origin:0 0;">Modell</div>
<div class="t" style="left:71.70px;top:153.84px;font-size:12px;line-height:14px;color:#8a8a8a;transform:scaleX(0.8159);transform-origin:0 0;">iLogic</div>
<div class="t" style="left:29.30px;top:177.84px;font-size:12px;line-height:14px;color:#222;transform:scaleX(0.9352);transform-origin:0 0;">SpeedUpInventor.ipt</div>
<div class="t" style="left:45.90px;top:197.84px;font-size:12px;line-height:14px;color:#222;transform:scaleX(0.8990);transform-origin:0 0;">Ansicht: Hauptansicht</div>
<div class="t" style="left:45.30px;top:217.84px;font-size:12px;line-height:14px;color:#222;transform:scaleX(0.8891);transform-origin:0 0;">Ursprung</div>
<div class="t" style="left:45.30px;top:237.84px;font-size:12px;line-height:14px;color:#222;transform:scaleX(0.8381);transform-origin:0 0;">Skizze1</div>
<div class="t" style="left:45.30px;top:257.84px;font-size:12px;line-height:14px;color:#222;transform:scaleX(0.8821);transform-origin:0 0;">Bauteilende</div>
<div class="t" style="left:1824px;top:227.5px;width:54px;text-align:center;font-size:13px;line-height:14px;font-weight:bold;color:#767c8a;transform:scaleX(0.85)">OBEN</div>
<div class="t" style="left:396.00px;top:972.84px;font-size:12px;line-height:14px;color:#1a90d8;transform:scaleX(1.0023);transform-origin:0 0;">SpeedUpInventor.ipt</div>
<div class="t" style="left:9.40px;top:999.84px;font-size:12px;line-height:14px;color:#222;transform:scaleX(0.9371);transform-origin:0 0;">Bereit</div>
<div class="t" style="left:1535.40px;top:999.84px;font-size:12px;line-height:14px;color:#222;transform:scaleX(0.9710);transform-origin:0 0;">-17,485 mm, 7,890 mm</div>
<div class="t" style="left:1670.20px;top:999.84px;font-size:12px;line-height:14px;color:#222;transform:scaleX(0.9802);transform-origin:0 0;">Skizze voll bestimmt</div>
<div class="t" style="left:1825.40px;top:999.84px;font-size:12px;line-height:14px;color:#222;transform:scaleX(0.6943);transform-origin:0 0;">1</div>
<div class="t" style="left:1863.20px;top:999.84px;font-size:12px;line-height:14px;color:#222;transform:scaleX(0.6642);transform-origin:0 0;">1</div>
</body></html>
